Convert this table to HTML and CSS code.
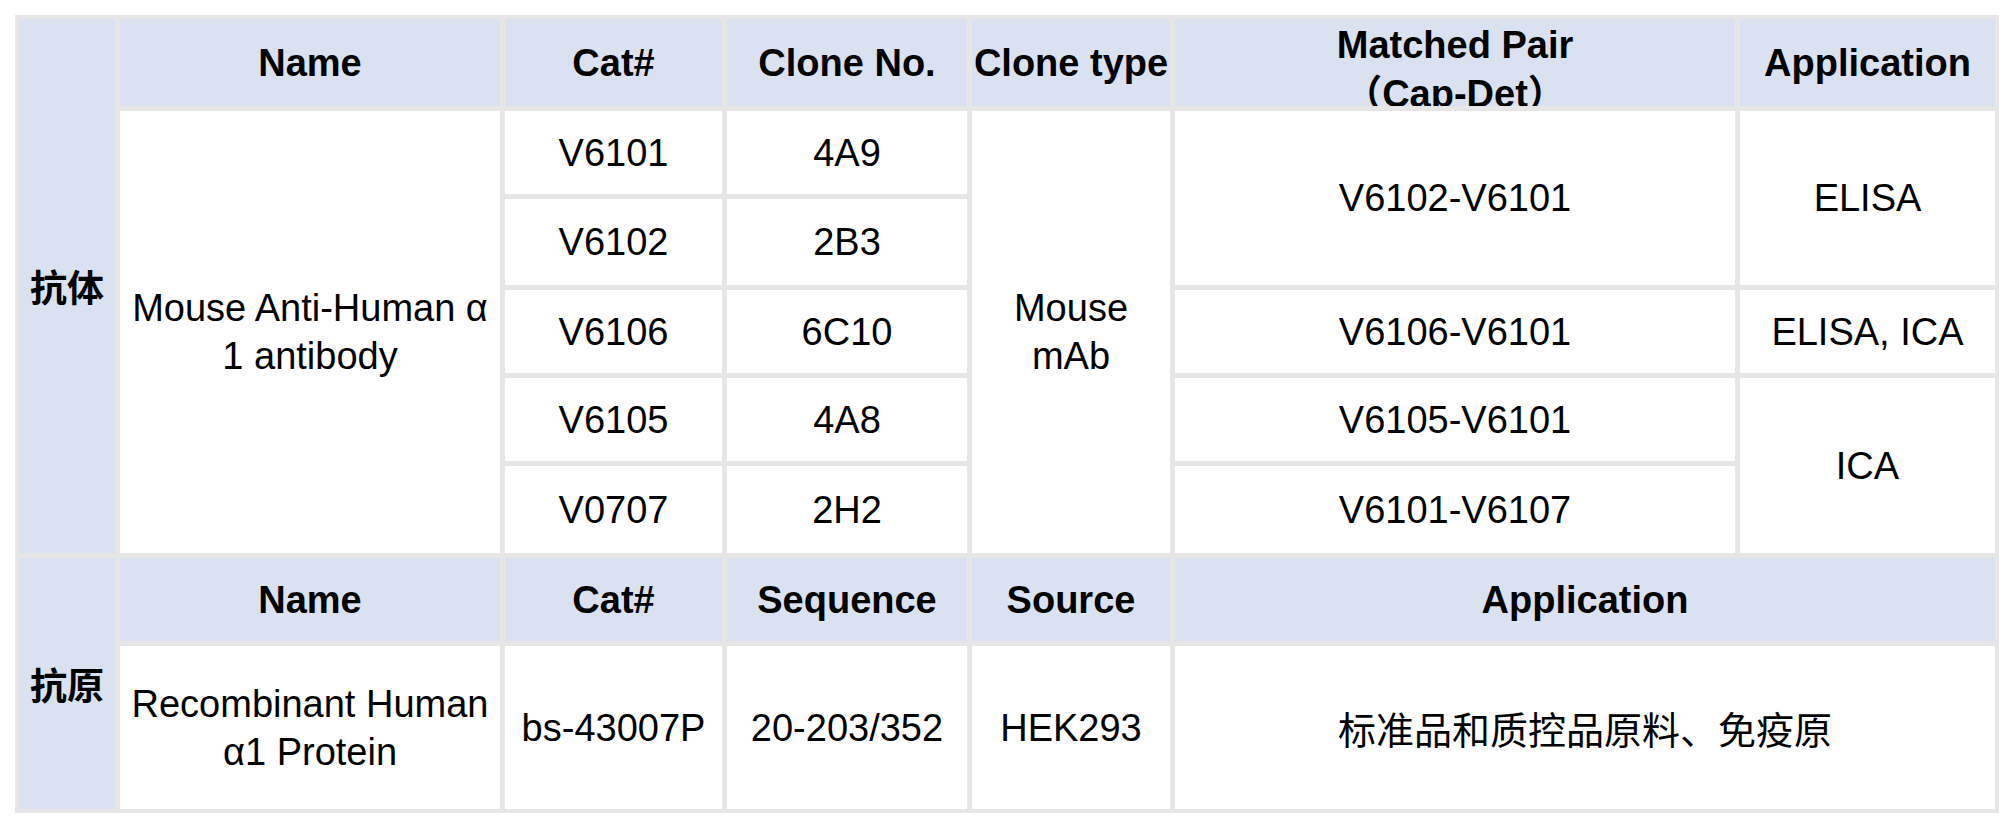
FILE: index.html
```html
<!DOCTYPE html>
<html lang="zh-CN">
<head>
<meta charset="utf-8">
<title>Antibody / Antigen table</title>
<link rel="stylesheet" href="styles.css">
</head>
<body>
<div class="sheet">
  <div class="cell head side span-r6">抗体</div>
  <div class="cell head">Name</div>
  <div class="cell head">Cat#</div>
  <div class="cell head">Clone No.</div>
  <div class="cell head">Clone type</div>
  <div class="cell head top">Matched Pair<br>（Cap-Det）</div>
  <div class="cell head">Application</div>

  <div class="cell span-r5">Mouse Anti-Human α<br>1 antibody</div>
  <div class="cell">V6101</div>
  <div class="cell">4A9</div>
  <div class="cell span-r5">Mouse<br>mAb</div>
  <div class="cell span-r2">V6102-V6101</div>
  <div class="cell span-r2">ELISA</div>

  <div class="cell">V6102</div>
  <div class="cell">2B3</div>

  <div class="cell">V6106</div>
  <div class="cell">6C10</div>
  <div class="cell">V6106-V6101</div>
  <div class="cell">ELISA, ICA</div>

  <div class="cell">V6105</div>
  <div class="cell">4A8</div>
  <div class="cell">V6105-V6101</div>
  <div class="cell span-r2">ICA</div>

  <div class="cell">V0707</div>
  <div class="cell">2H2</div>
  <div class="cell">V6101-V6107</div>

  <div class="cell head side span-r2">抗原</div>
  <div class="cell head">Name</div>
  <div class="cell head">Cat#</div>
  <div class="cell head">Sequence</div>
  <div class="cell head">Source</div>
  <div class="cell head span-c2">Application</div>

  <div class="cell">Recombinant Human<br>α1 Protein</div>
  <div class="cell">bs-43007P</div>
  <div class="cell">20-203/352</div>
  <div class="cell">HEK293</div>
  <div class="cell span-c2 cjk">标准品和质控品原料、免疫原</div>
</div>
</body>
</html>
```

FILE: styles.css
```css
html, body {
  margin: 0;
  padding: 0;
  background: #ffffff;
}

body {
  padding: 15px;
  font-family: "Liberation Sans", "Noto Sans CJK SC", sans-serif;
  font-size: 38px;
  color: #000000;
}

.sheet {
  display: grid;
  width: 1984px;
  box-sizing: border-box;
  grid-template-columns: 96px 380px 217px 240px 198px 560px 255px;
  grid-template-rows: 87px 83px 86px 83px 83px 87px 83px 163px;
  gap: 5px;
  padding: 4px;
  background: #e6e6e6;
}

.cell {
  display: flex;
  align-items: center;
  justify-content: center;
  text-align: center;
  background: #ffffff;
  line-height: 48px;
  overflow: hidden;
  white-space: nowrap;
}

.head {
  background: #dae2f2;
  font-weight: 700;
}

.side {
  font-family: "Noto Sans CJK SC", sans-serif;
  font-weight: 700;
  font-size: 37px;
}

.top {
  align-items: flex-start;
  line-height: 49px;
  padding-top: 2px;
}

.cjk {
  font-family: "Noto Sans CJK SC", sans-serif;
  font-weight: 400;
  font-size: 38px;
}

.span-r2 { grid-row: span 2; }
.span-r5 { grid-row: span 5; }
.span-r6 { grid-row: span 6; }
.span-c2 { grid-column: span 2; }
```
